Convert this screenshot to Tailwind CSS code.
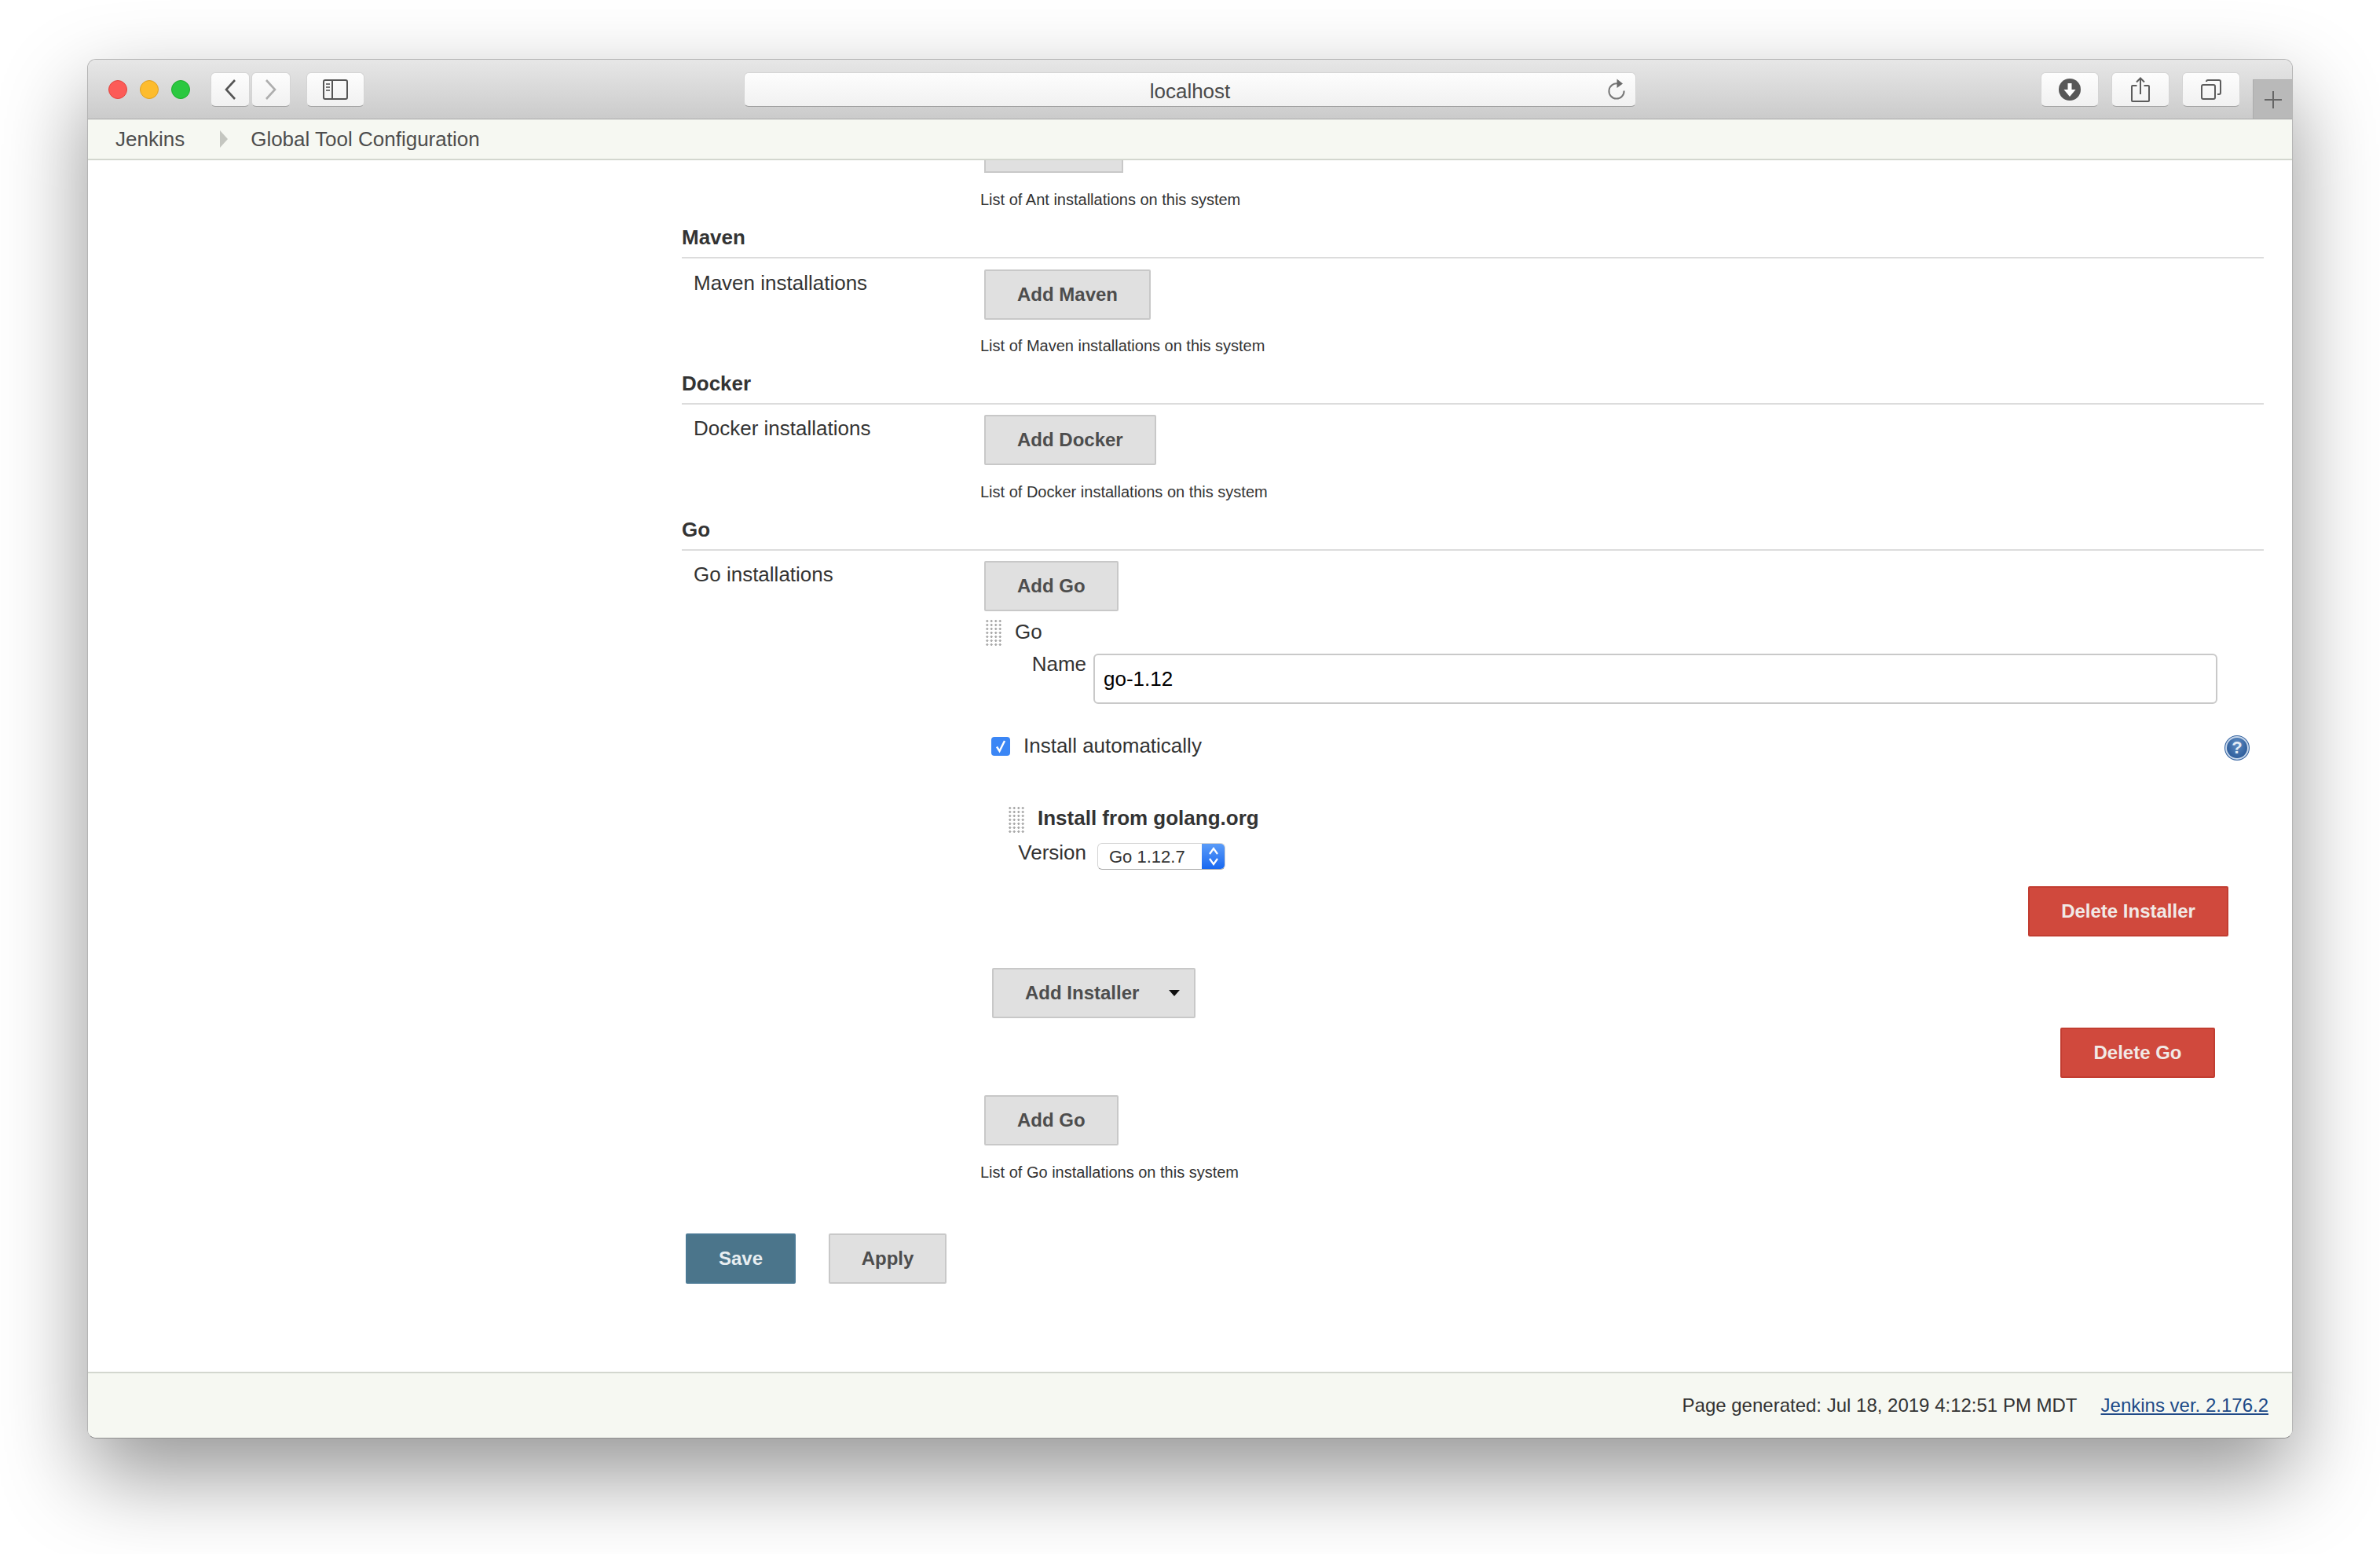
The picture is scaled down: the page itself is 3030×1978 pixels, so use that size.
<!DOCTYPE html>
<html>
<head>
<meta charset="utf-8">
<script src="https://cdn.jsdelivr.net/npm/@tailwindcss/browser@4"></script>
</head>
<body class="bg-white font-['Liberation_Sans',Arial,sans-serif] text-[26px] text-[#333] w-[3030px] h-[1978px] overflow-hidden">
<div class="pt-[75px] pl-[111px]">
  <div class="w-[2808px] h-[1756px] flex flex-col rounded-[11px] overflow-hidden border border-[#b4b4b4] border-b-[#8f8f8f] shadow-[0_46px_110px_0_rgba(0,0,0,0.42)]">

    <!-- title bar -->
    <div class="relative h-[76px] shrink-0 flex items-start pt-[16px] pl-[26px] bg-linear-to-b from-[#e7e7e7] to-[#cbcbcb] border-b border-[#a8a8a8]">
      <div class="flex items-center gap-[16px] h-[44px]">
        <span class="w-[24px] h-[24px] rounded-full bg-[#fc5b57] border border-[#e2463f]"></span>
        <span class="w-[24px] h-[24px] rounded-full bg-[#fdbc2e] border border-[#dfa023]"></span>
        <span class="w-[24px] h-[24px] rounded-full bg-[#2bc840] border border-[#1dad2b]"></span>
      </div>
      <button class="ml-[26px] w-[50px] h-[44px] flex items-center justify-center rounded-[6px] bg-linear-to-b from-[#fdfdfd] to-[#f1f1f1] border border-[#d4d4d4] border-b-[#a6a6a6]">
        <svg width="16" height="26" viewBox="0 0 16 26" fill="none" stroke="#555" stroke-width="2.6"><path d="M14 1 3 13l11 12"/></svg>
      </button>
      <button class="ml-[2px] w-[50px] h-[44px] flex items-center justify-center rounded-[6px] bg-linear-to-b from-[#fdfdfd] to-[#f1f1f1] border border-[#d4d4d4] border-b-[#a6a6a6]">
        <svg width="16" height="26" viewBox="0 0 16 26" fill="none" stroke="#aeaeae" stroke-width="2.6"><path d="M2 1l11 12L2 25"/></svg>
      </button>
      <button class="ml-[20px] w-[74px] h-[44px] flex items-center justify-center rounded-[6px] bg-linear-to-b from-[#fdfdfd] to-[#f1f1f1] border border-[#d4d4d4] border-b-[#a6a6a6]">
        <svg width="32" height="26" viewBox="0 0 32 26" fill="none"><rect x="1" y="1" width="30" height="24" rx="2" stroke="#555" stroke-width="2"/><path d="M12 1v24" stroke="#555" stroke-width="2"/><path d="M4 6h5M4 10h5M4 14h5" stroke="#777" stroke-width="2"/></svg>
      </button>
      <div class="relative ml-[483px] w-[1136px] h-[44px] flex items-center justify-center rounded-[6px] bg-linear-to-b from-[#fdfdfd] to-[#f1f1f1] border border-[#d4d4d4] border-b-[#a0a0a0] text-[#4a4a4a]">
        <span class="leading-[30px] mt-[3px]">localhost</span>
        <svg class="absolute right-[12px] top-[7px]" width="24" height="28" viewBox="0 0 24 28" fill="none"><path d="M14 6.6A9.6 9.6 0 1 0 21.6 15.5" stroke="#777" stroke-width="2"/><path d="M12.5 0.5 20 6.5 12.5 12z" fill="#6b6b6b"/></svg>
      </div>
      <button class="ml-[515px] w-[74px] h-[44px] flex items-center justify-center rounded-[6px] bg-linear-to-b from-[#fdfdfd] to-[#f1f1f1] border border-[#d4d4d4] border-b-[#a6a6a6]">
        <svg width="28" height="28" viewBox="0 0 28 28"><circle cx="14" cy="14" r="14" fill="#585858"/><path d="M11.5 6h5v8h5L14 23 6.500 14h5z" fill="#fff"/></svg>
      </button>
      <button class="ml-[16px] w-[74px] h-[44px] flex items-center justify-center rounded-[6px] bg-linear-to-b from-[#fdfdfd] to-[#f1f1f1] border border-[#d4d4d4] border-b-[#a6a6a6]">
        <svg width="24" height="32" viewBox="0 0 24 32" fill="none" stroke="#5c5c5c" stroke-width="2"><path d="M7.500 11H2a1 1 0 0 0-1 1v18a1 1 0 0 0 1 1h20a1 1 0 0 0 1-1V12a1 1 0 0 0-1-1h-5.500"/><path d="M12 22V2M7 6.500 12 1.500l5 5"/></svg>
      </button>
      <button class="ml-[16px] w-[74px] h-[44px] flex items-center justify-center rounded-[6px] bg-linear-to-b from-[#fdfdfd] to-[#f1f1f1] border border-[#d4d4d4] border-b-[#a6a6a6]">
        <svg width="26" height="26" viewBox="0 0 26 26" fill="none" stroke="#5c5c5c" stroke-width="2"><rect x="1" y="7" width="17" height="18" rx="2"/><path d="M7 3a2 2 0 0 1 2-2h14a2 2 0 0 1 2 2v14a2 2 0 0 1-2 2h-2"/></svg>
      </button>
      <div class="absolute right-0 bottom-0 w-[50px] h-[50px] flex items-center justify-center bg-[#b9b9b9] border-l border-t border-[#adadad]">
        <svg width="24" height="24" viewBox="0 0 24 24" stroke="#666" stroke-width="2"><path d="M12 1v22M1 12h22"/></svg>
      </div>
    </div>

    <!-- breadcrumb -->
    <div class="h-[52px] shrink-0 flex items-center pl-[35px] bg-[#f6f8f2] border-b-2 border-[#d3d7cf] text-[#4d4d4d]">
      <span>Jenkins</span>
      <svg class="ml-[45px] mr-[29px]" width="10" height="22" viewBox="0 0 10 22"><path d="M0 0l10 11L0 22z" fill="#c4c6c0"/></svg>
      <span>Global Tool Configuration</span>
    </div>

    <!-- content -->
    <main class="flex-1 overflow-hidden bg-white pl-[756px] pr-[36px]">
      <div class="ml-[385px] w-[177px] h-[16px] bg-[#e0e0e0] border-x-2 border-b-2 border-[#c8c8c8]"></div>
      <p class="ml-[380px] mt-[22px] h-[24px] leading-[24px] text-[20px]">List of Ant installations on this system</p>

      <h2 class="mt-[21px] h-[42px] leading-[30px] font-bold border-b-2 border-[#dcdcdc]">Maven</h2>
      <div class="mt-[14px] flex items-start">
        <span class="w-[385px] pl-[15px] leading-[30px] mt-[2px]">Maven installations</span>
        <button class="h-[64px] px-[40px] bg-[#e0e0e0] border-2 border-[#c8c8c8] rounded-[2px] text-[24px] font-bold text-[#4d4d4d]">Add Maven</button>
      </div>
      <p class="ml-[380px] mt-[21px] h-[24px] leading-[24px] text-[20px]">List of Maven installations on this system</p>

      <h2 class="mt-[21px] h-[42px] leading-[30px] font-bold border-b-2 border-[#dcdcdc]">Docker</h2>
      <div class="mt-[13px] flex items-start">
        <span class="w-[385px] pl-[15px] leading-[30px] mt-[2px]">Docker installations</span>
        <button class="h-[64px] px-[40px] bg-[#e0e0e0] border-2 border-[#c8c8c8] rounded-[2px] text-[24px] font-bold text-[#4d4d4d]">Add Docker</button>
      </div>
      <p class="ml-[380px] mt-[22px] h-[24px] leading-[24px] text-[20px]">List of Docker installations on this system</p>

      <h2 class="mt-[21px] h-[42px] leading-[30px] font-bold border-b-2 border-[#dcdcdc]">Go</h2>
      <div class="mt-[13px] flex items-start">
        <span class="w-[385px] pl-[15px] leading-[30px] mt-[2px]">Go installations</span>
        <div class="w-[1628px]">
          <button class="block h-[64px] px-[40px] bg-[#e0e0e0] border-2 border-[#c8c8c8] rounded-[2px] text-[24px] font-bold text-[#4d4d4d]">Add Go</button>

          <div class="mt-[10px] h-[34px] flex items-center">
            <span class="ml-[1px] w-[22px] h-[34px] bg-[radial-gradient(circle,#a8a8a8_1.300px,transparent_1.600px)] bg-[length:5.500px_5px]"></span>
            <span class="ml-[16px] leading-[30px] -translate-y-[1px]">Go</span>
          </div>

          <div class="mt-[10px] flex items-start">
            <label class="w-[130px] text-right leading-[30px] -mt-[2px]">Name</label>
            <input value="go-1.12" class="ml-[9px] w-[1431px] h-[64px] px-[11px] bg-white border-2 border-[#c9c9c9] rounded-[6px] text-black outline-none">
          </div>

          <div class="mt-[40px] h-[32px] flex items-start">
            <span class="ml-[9px] mt-[2px] w-[24px] h-[24px] rounded-[4px] bg-[#3b86f5] flex items-center justify-center">
              <svg width="16" height="18" viewBox="0 0 16 18" fill="none" stroke="#fff" stroke-width="2.400"><path d="M3 9.500 6.500 15 13 2"/></svg>
            </span>
            <span class="ml-[17px] -mt-[2px] leading-[30px]">Install automatically</span>
            <span class="ml-auto mr-[17px] w-[32px] h-[32px] rounded-full bg-[#2f5f9e] p-[1px]">
              <span class="block w-[30px] h-[30px] rounded-full bg-[#c6d6ea] p-[2px]">
                <span class="w-[26px] h-[26px] rounded-full bg-radial-[at_50%_30%] from-[#5f8cc2] to-[#1f4f8f] flex items-center justify-center text-[#e4ecf5] font-bold text-[22px] leading-none">?</span>
              </span>
            </span>
          </div>

          <div class="mt-[58px] h-[34px] flex items-center">
            <span class="ml-[30px] w-[22px] h-[34px] bg-[radial-gradient(circle,#a8a8a8_1.300px,transparent_1.600px)] bg-[length:5.500px_5px]"></span>
            <span class="ml-[16px] leading-[30px] font-bold -translate-y-[2px]">Install from golang.org</span>
          </div>

          <div class="mt-[13px] flex items-start">
            <label class="w-[130px] text-right leading-[30px] -mt-[3px]">Version</label>
            <div class="relative ml-[14px] w-[163px] h-[34px] flex items-center pl-[14px] rounded-[6px] bg-white border border-[#d4d4d4] border-b-[#a8a8a8] text-[22px] overflow-hidden">
              <span class="mt-[1px]">Go 1.12.7</span>
              <span class="absolute right-0 top-0 bottom-0 w-[29px] flex items-center justify-center bg-linear-to-b from-[#5a9bf8] to-[#1768f0]">
                <svg width="14" height="26" viewBox="0 0 14 26" fill="none" stroke="#fff" stroke-width="2.200"><path d="M2 10l5-7 5 7M2 16l5 7 5-7"/></svg>
              </span>
            </div>
          </div>

          <div class="mt-[21px] w-[1584px] flex justify-end">
            <button class="h-[64px] w-[255px] bg-[#d0493d] border-2 border-[#c23d31] rounded-[2px] text-[24px] font-bold text-[#f1e9e6]">Delete Installer</button>
          </div>

          <button class="mt-[40px] ml-[10px] h-[64px] w-[259px] flex items-center pl-[40px] bg-[#e0e0e0] border-2 border-[#c8c8c8] rounded-[2px] text-[24px] font-bold text-[#4d4d4d]">
            Add Installer
            <svg class="ml-[38px]" width="14" height="8" viewBox="0 0 14 8"><path d="M0 0h14L7 8z" fill="#111"/></svg>
          </button>

          <div class="mt-[12px] w-[1567px] flex justify-end">
            <button class="h-[64px] w-[197px] bg-[#d0493d] border-2 border-[#c23d31] rounded-[2px] text-[24px] font-bold text-[#f1e9e6]">Delete Go</button>
          </div>

          <button class="block mt-[22px] h-[64px] px-[40px] bg-[#e0e0e0] border-2 border-[#c8c8c8] rounded-[2px] text-[24px] font-bold text-[#4d4d4d]">Add Go</button>
          <p class="-ml-[5px] mt-[22px] h-[24px] leading-[24px] text-[20px]">List of Go installations on this system</p>
        </div>
      </div>

      <div class="mt-[66px] ml-[5px] flex items-start gap-[42px]">
        <button class="h-[64px] w-[140px] bg-[#4b758b] border-2 border-[#4a7893] rounded-[2px] text-[24px] font-bold text-[#e8eef1]">Save</button>
        <button class="h-[64px] w-[150px] bg-[#e0e0e0] border-2 border-[#c8c8c8] rounded-[2px] text-[24px] font-bold text-[#4d4d4d]">Apply</button>
      </div>
    </main>

    <!-- footer -->
    <footer class="h-[84px] shrink-0 flex items-center justify-end gap-[30px] pr-[30px] bg-[#f6f8f2] border-t-2 border-[#d3d7cf] text-[24px] leading-[30px]">
      <span>Page generated: Jul 18, 2019 4:12:51 PM MDT</span>
      <a href="#" class="text-[#204a87] underline">Jenkins ver. 2.176.2</a>
    </footer>
  </div>
</div>
</body>
</html>
